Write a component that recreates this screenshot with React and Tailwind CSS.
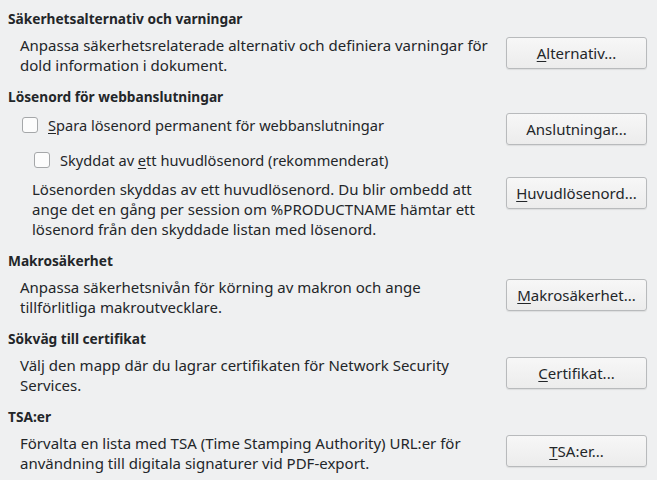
import React from 'react';

function Mn({ children }) {
  return <span className="underline underline-offset-2">{children}</span>;
}

function Button({ children, className = '' }) {
  return (
    <button
      type="button"
      className={`flex h-[32px] w-[141px] shrink-0 items-center justify-center rounded-[3px] border border-[#b8babc] bg-gradient-to-b from-[#f7f7f7] to-[#ececec] text-[15px] leading-[20px] text-[#232629] shadow-[0_1px_1px_rgba(0,0,0,0.08)] ${className}`}
    >
      {children}
    </button>
  );
}

function Checkbox() {
  return <span className="block h-[16px] w-[16px] shrink-0 rounded-[3px] border border-[#a5a7a9] bg-[#fcfcfc]" />;
}

function Heading({ children, className = '' }) {
  return <h2 className={`pl-[8px] text-[13.7px] font-bold leading-[20px] ${className}`}>{children}</h2>;
}

function Row({ text, button }) {
  return (
    <div className="mt-[6px] flex items-start justify-between pl-[20px]">
      <p className="leading-[20px]">{text}</p>
      <Button className="mt-[2px]">{button}</Button>
    </div>
  );
}

export default function App() {
  return (
    <div
      className="h-[480px] w-[657px] overflow-hidden bg-[#eff0f1] pr-[10px] pt-[9px] text-[15px] text-[#232629]"
      style={{ fontFamily: '"Noto Sans", "Open Sans", sans-serif' }}
    >
      {/* Säkerhetsalternativ */}
      <Heading>Säkerhetsalternativ och varningar</Heading>
      <Row
        text={<>Anpassa säkerhetsrelaterade alternativ och definiera varningar för<br />dold information i dokument.</>}
        button={<><Mn>A</Mn>lternativ...</>}
      />

      {/* Lösenord */}
      <Heading className="mt-[12px]">Lösenord för webbanslutningar</Heading>
      <div className="mt-[6px] flex items-start justify-between">
        <div className="flex flex-col">
          <label className="mt-[2px] flex items-center gap-[10px] pl-[22px] text-[14.6px] leading-[20px]">
            <Checkbox />
            <span><Mn>S</Mn>para lösenord permanent för webbanslutningar</span>
          </label>
          <label className="mt-[15px] flex items-center gap-[10px] pl-[34px] text-[14.6px] leading-[20px]">
            <Checkbox />
            <span>Skyddat av <Mn>e</Mn>tt huvudlösenord (rekommenderat)</span>
          </label>
          <p className="mt-[9px] pl-[32px] leading-[20px]">
            Lösenorden skyddas av ett huvudlösenord. Du blir ombedd att<br />
            ange det en gång per session om %PRODUCTNAME hämtar ett<br />
            lösenord från den skyddade listan med lösenord.
          </p>
        </div>
        <div className="flex flex-col gap-[32px]">
          <Button>Anslutningar...</Button>
          <Button><Mn>H</Mn>uvudlösenord...</Button>
        </div>
      </div>

      {/* Makro */}
      <Heading className="mt-[12px]">Makrosäkerhet</Heading>
      <Row
        text={<>Anpassa säkerhetsnivån för körning av makron och ange<br />tillförlitliga makroutvecklare.</>}
        button={<><Mn>M</Mn>akrosäkerhet...</>}
      />

      {/* Certifikat */}
      <Heading className="mt-[12px]">Sökväg till certifikat</Heading>
      <Row
        text={<>Välj den mapp där du lagrar certifikaten för Network Security<br />Services.</>}
        button={<><Mn>C</Mn>ertifikat...</>}
      />

      {/* TSA */}
      <Heading className="mt-[12px]">TSA:er</Heading>
      <Row
        text={<>Förvalta en lista med TSA (Time Stamping Authority) URL:er för<br />användning till digitala signaturer vid PDF-export.</>}
        button={<><Mn>T</Mn>SA:er...</>}
      />
    </div>
  );
}
